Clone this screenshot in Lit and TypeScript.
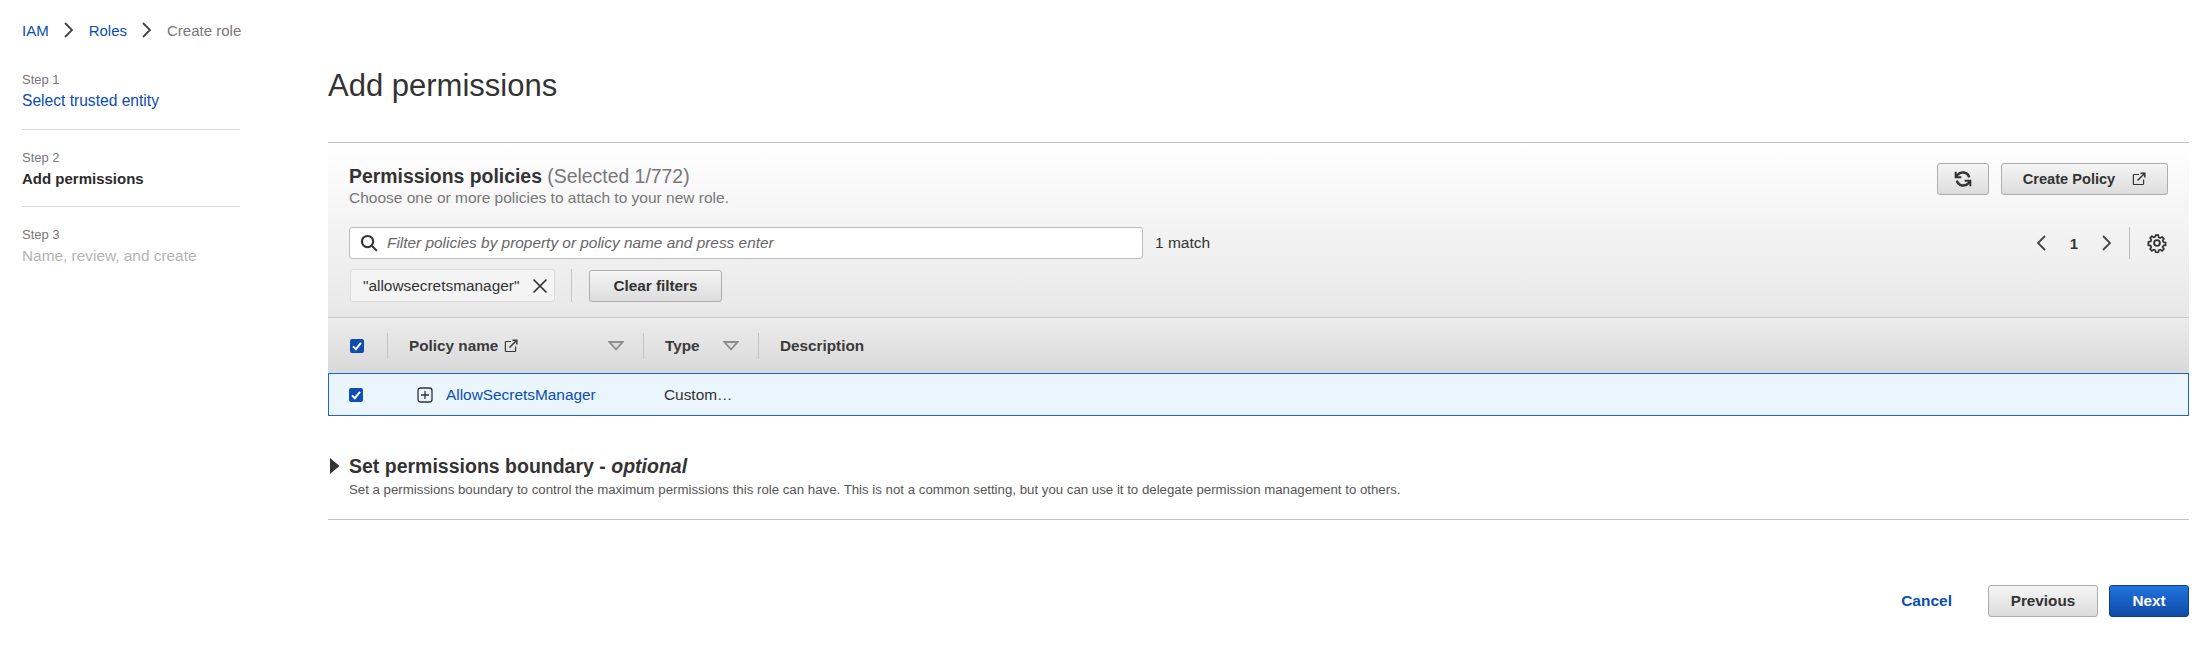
import { LitElement, html, css, svg } from "lit";
import { customElement } from "lit/decorators.js";

const extIcon = svg`<svg class="ext" viewBox="0 0 14 14" width="14" height="14" fill="none" stroke="currentColor" stroke-width="1.2"><path d="M7 2.5H2.2a.8.8 0 0 0-.8.8v8.4a.8.8 0 0 0 .8.8h8.6a.8.8 0 0 0 .8-.8V7.5"/><path d="M5.5 8.5 12.5 1.5M8.5 1.2h4.3v4.3" stroke-width="1.5"/></svg>`;
const chev = (d: string) => svg`<svg viewBox="0 0 12 18" width="12" height="18" fill="none" stroke="#444" stroke-width="1.8"><path d="${d}"/></svg>`;
const check = svg`<svg viewBox="0 0 14 14" width="14" height="14"><rect width="14" height="14" rx="2" fill="#0f4db0"/><path d="M3 7.4 5.8 10.2 11 3.8" fill="none" stroke="#fff" stroke-width="2"/></svg>`;
const sortIcon = svg`<svg viewBox="0 0 16 10" width="16" height="10"><path d="M1.5 1h13L8 8.500z" fill="#dedede" stroke="#8c8c8c" stroke-width="1.8"/></svg>`;

@customElement("app-root")
export class AppRoot extends LitElement {
  static styles = css`
    :host { display: block; width: 2205px; height: 670px; background: #fff; font-family: "Liberation Sans", Arial, sans-serif; color: #333; font-size: 15.400px; overflow: hidden; }
    a { color: #0b4db3; text-decoration: none; }
    .page { display: grid; grid-template-columns: 218px 1861px; column-gap: 88px; padding: 0 0 0 22px; }
    .crumbs { grid-column: 1 / -1; display: flex; align-items: center; height: 20px; margin-top: 20px; font-size: 15px; color: #777; }
    .crumbs svg { margin: 0 14px 0 14px; }
    .steps { padding-top: 30px; }
    .step { border-bottom: 1px solid #d9d9d9; height: 59px; box-sizing: content-box; }
    .step + .step { padding-top: 18px; height: 58px; }
    .step:last-child { border: 0; }
    .step .n { font-size: 13px; color: #777; line-height: 20px; }
    .step .t { font-size: 15.600px; line-height: 20px; margin-top: 1px; }
    .step b { font-weight: 700; color: #2b2b2b; font-size: 15px; }
    .step .off { color: #b5b5b5; font-size: 15.400px; }
    h1 { font-size: 31px; font-weight: 400; line-height: 40px; margin: 36px 0 0; color: #333; height: 76px; }
    .main { margin-top: -10px; display: flex; flex-direction: column; }
    .card { border-top: 1px solid #bdbdbd; }
    .head { background: linear-gradient(#fff 0, #f3f3f3 50%, #e8e8e8 100%); height: 175px; box-sizing: border-box; padding: 22px 21px 0; display: flex; flex-direction: column; border-bottom: 1px solid #c8c8c8; }
    .title-row { display: flex; justify-content: space-between; align-items: flex-start; height: 62px; }
    .title { font-size: 19.400px; line-height: 22px; font-weight: 700; color: #333; }
    .title span { font-weight: 400; color: #777; }
    .sub { font-size: 15.500px; color: #777; line-height: 16px; margin-top: 3px; }
    .actions { display: flex; gap: 12px; margin-top: -2px; }
    .btn { box-sizing: border-box; display: flex; align-items: center; justify-content: center; gap: 17px; height: 32px; border: 1px solid #adadad; border-radius: 3px; background: linear-gradient(#f5f5f5, #dcdcdc); font-weight: 700; font-size: 15.300px; color: #333; }
    .create { width: 167px; font-size: 14.600px; }
    .refresh { width: 52px; }
    .search-row { display: flex; align-items: center; height: 32px; }
    .search { box-sizing: border-box; width: 794px; height: 32px; background: #fff; border: 1px solid #bcbcbc; border-radius: 3px; display: flex; align-items: center; gap: 9px; padding-left: 10px; font-style: italic; color: #666; font-size: 15.400px; }
    .match { margin-left: 12px; font-size: 15.500px; color: #333; }
    .pager { margin-left: auto; display: flex; align-items: center; height: 32px; margin-right: 1px; }
    .pager .num { width: 54px; text-align: center; font-weight: 700; font-size: 15px; }
    .pager .sep { width: 1px; height: 32px; background: #bdbdbd; margin: 0 17px 0 16px; }
    .filter-row { display: flex; align-items: center; margin-top: 10px; height: 33px; }
    .chip { box-sizing: border-box; width: 205px; height: 33px; border: 1px solid #dcdcdc; border-radius: 3px; background: #f4f4f4; display: flex; align-items: center; justify-content: space-between; padding: 0 6px 0 12px; font-size: 15.400px; color: #333; margin-left: 1px; }
    .vsep { width: 1px; height: 33px; background: #c4c4c4; margin: 0 17px 0 16px; }
    .clear { width: 133px; }
    .thead { height: 55px; box-sizing: border-box; background: linear-gradient(#ececec, #d9d9d9); display: flex; align-items: center; font-weight: 700; font-size: 15.300px; color: #3a3a3a; }
    .cell { display: flex; align-items: center; height: 26px; box-sizing: border-box; }
    .cell + .cell { border-left: 1px solid #c2c2c2; }
    .c0 { width: 59px; padding-left: 22px; }
    .c1 { width: 256px; padding-left: 21px; gap: 6px; }
    .c2 { width: 115px; padding-left: 21px; justify-content: space-between; padding-right: 19px; }
    .c1 .sort { margin-left: auto; margin-right: 19px; display: flex; }
    .c3 { padding-left: 21px; }
    .row { height: 43px; box-sizing: border-box; background: #eaf5fe; border: 1px solid #1a66c9; display: flex; align-items: center; font-size: 15.400px; }
    .r0 { width: 88px; padding-left: 20px; box-sizing: border-box; display: flex; }
    .r1 { width: 247px; box-sizing: border-box; display: flex; align-items: center; gap: 13px; }
    .boundary { display: flex; flex-direction: column; padding: 39px 0 0; height: 64px; border-bottom: 1px solid #c4c4c4; }
    .b-title { display: flex; align-items: center; font-size: 19.500px; font-weight: 700; line-height: 22px; gap: 7px; color: #333; }
    .b-title em { font-style: italic; }
    .b-sub { font-size: 13.250px; color: #555; padding-left: 21px; margin-top: 5px; line-height: 16px; }
    .footer { display: flex; justify-content: flex-end; align-items: center; margin-top: 65px; gap: 11px; }
    .cancel { font-weight: 700; font-size: 15.500px; margin-right: 25px; }
    .prev { width: 110px; }
    .next { width: 80px; color: #fff; background: linear-gradient(#2274df, #0e4aa6); border-color: #0c3f8f; }
  `;

  render() {
    return html`
      <div class="page">
        <nav class="crumbs">
          <a>IAM</a>${chev("M2 2l7 7-7 7")}<a>Roles</a>${chev("M2 2l7 7-7 7")}<span>Create role</span>
        </nav>
        <aside class="steps">
          <div class="step"><div class="n">Step 1</div><div class="t"><a>Select trusted entity</a></div></div>
          <div class="step"><div class="n">Step 2</div><div class="t"><b>Add permissions</b></div></div>
          <div class="step"><div class="n">Step 3</div><div class="t off">Name, review, and create</div></div>
        </aside>
        <main class="main">
          <h1>Add permissions</h1>
          <section class="card">
            <div class="head">
              <div class="title-row">
                <div>
                  <div class="title">Permissions policies <span>(Selected 1/772)</span></div>
                  <div class="sub">Choose one or more policies to attach to your new role.</div>
                </div>
                <div class="actions">
                  <div class="btn refresh">
                    <svg viewBox="0 0 16 16" width="18" height="18" fill="none" stroke="#333" stroke-width="2.200"><path d="M13.500 6.500A6 6 0 0 0 3 4.500L2 6"/><path d="M2.500 9.500A6 6 0 0 0 13 11.500l1-1.500"/><path d="M1.500 1.500V6.500H6.500M14.500 14.500V9.500H9.500" stroke-width="1.800"/></svg>
                  </div>
                  <div class="btn create">Create Policy ${extIcon}</div>
                </div>
              </div>
              <div class="search-row">
                <div class="search">
                  <svg viewBox="0 0 16 16" width="18" height="18" fill="none" stroke="#333" stroke-width="1.800"><circle cx="6.700" cy="6.700" r="5"/><path d="M10.500 10.500 15 15"/></svg>
                  Filter policies by property or policy name and press enter
                </div>
                <span class="match">1 match</span>
                <div class="pager">
                  ${chev("M10 2 3 9l7 7")}
                  <span class="num">1</span>
                  ${chev("M2 2l7 7-7 7")}
                  <span class="sep"></span>
                  <svg viewBox="0 0 18 18" width="20" height="20" fill="none" stroke="#333" stroke-width="1.700"><circle cx="9" cy="9" r="2.600"/><path d="M7.700 1.200h2.600l.4 2.200 1.500.7 1.900-1.200 1.800 1.900-1.200 1.800.7 1.500 2.200.5v2.600l-2.200.4-.7 1.500 1.200 1.900-1.800 1.800-1.900-1.200-1.500.7-.4 2.200H7.700l-.4-2.200-1.500-.7-1.900 1.200-1.800-1.800 1.200-1.900-.7-1.500-2.200-.4V7.900l2.200-.5.700-1.500-1.200-1.800 1.800-1.900 1.900 1.200 1.500-.7z" transform="translate(.9 .9) scale(.9)"/></svg>
                </div>
              </div>
              <div class="filter-row">
                <div class="chip">"allowsecretsmanager"
                  <svg viewBox="0 0 16 16" width="16" height="16" fill="none" stroke="#333" stroke-width="1.700"><path d="M1.500 1.500l13 13M14.500 1.500l-13 13"/></svg>
                </div>
                <span class="vsep"></span>
                <div class="btn clear">Clear filters</div>
              </div>
            </div>
            <div class="thead">
              <div class="cell c0">${check}</div>
              <div class="cell c1">Policy name ${extIcon}<span class="sort">${sortIcon}</span></div>
              <div class="cell c2">Type ${sortIcon}</div>
              <div class="cell c3">Description</div>
            </div>
            <div class="row">
              <div class="r0">${check}</div>
              <div class="r1">
                <svg viewBox="0 0 16 16" width="16" height="16" fill="none" stroke="#333" stroke-width="1.300"><rect x="1" y="1" width="14" height="14" rx="2.500"/><path d="M8 4v8M4 8h8"/></svg>
                <a>AllowSecretsManager</a>
              </div>
              <span>Custom…</span>
            </div>
          </section>
          <section class="boundary">
            <div class="b-title">
              <svg viewBox="0 0 14 18" width="14" height="18"><path d="M2 1l9.500 8L2 17z" fill="#333"/></svg>
              <span>Set permissions boundary - <em>optional</em></span>
            </div>
            <div class="b-sub">Set a permissions boundary to control the maximum permissions this role can have. This is not a common setting, but you can use it to delegate permission management to others.</div>
          </section>
          <div class="footer">
            <a class="cancel">Cancel</a>
            <div class="btn prev">Previous</div>
            <div class="btn next">Next</div>
          </div>
        </main>
      </div>
    `;
  }
}
